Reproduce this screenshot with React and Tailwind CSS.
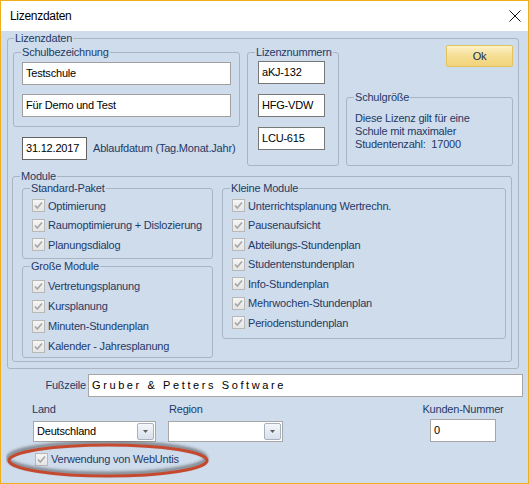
import React from 'react';

const labelColor = 'text-[#1f3a66]';

const Group = ({ label, className = '', labelLeft = 'left-[7px]', children }) => (
  <div className={`relative border border-[#a9b5c5] rounded-[3px] ${className}`}>
    <span className={`absolute ${labelLeft} top-[-7px] px-[1px] bg-[#cfdcec] leading-[13px] whitespace-nowrap ${labelColor}`}>
      {label}
    </span>
    {children}
  </div>
);

const TextBox = ({ value, className = '', border = 'border-[#a0a0a0]' }) => (
  <div className={`bg-white border ${border} flex items-center pl-[3px] text-black whitespace-pre ${className}`}>
    {value}
  </div>
);

const Check = () => (
  <svg width="13" height="13" viewBox="0 0 13 13" className="shrink-0">
    <defs>
      <linearGradient id="cb" x1="0" y1="0" x2="0" y2="1">
        <stop offset="0" stopColor="#f6f6f6" />
        <stop offset="1" stopColor="#e4e4e4" />
      </linearGradient>
    </defs>
    <rect x="0.5" y="0.5" width="12" height="12" fill="url(#cb)" stroke="#b8b8b8" />
    <path d="M3 6.5 L5.3 9 L10 3.5" fill="none" stroke="#a6a6a6" strokeWidth="1.6" />
  </svg>
);

const CheckRow = ({ label, h = 'h-[19.5px]' }) => (
  <div className={`flex items-center ${h}`}>
    <Check />
    <span className={`ml-[3px] whitespace-nowrap ${labelColor}`}>{label}</span>
  </div>
);

const Combo = ({ value, className = '' }) => (
  <div className={`h-[21px] bg-white border border-[#a7a7a7] flex items-center justify-between pl-[3px] pr-[1px] text-black ${className}`}>
    <span>{value}</span>
    <div className="w-[17px] h-[17px] border border-[#a7b2c1] rounded-[2px] bg-gradient-to-b from-[#f4f7fb] to-[#d8e0eb] flex items-center justify-center">
      <svg width="5" height="3" viewBox="0 0 5 3">
        <path d="M0 0 H5 L2.5 3 Z" fill="#5c5c5c" />
      </svg>
    </div>
  </div>
);

const standard = ['Optimierung', 'Raumoptimierung + Dislozierung', 'Planungsdialog'];
const gross = ['Vertretungsplanung', 'Kursplanung', 'Minuten-Stundenplan', 'Kalender - Jahresplanung'];
const klein = [
  'Unterrichtsplanung Wertrechn.',
  'Pausenaufsicht',
  'Abteilungs-Stundenplan',
  'Studentenstundenplan',
  'Info-Stundenplan',
  'Mehrwochen-Stundenplan',
  'Periodenstundenplan',
];

export default function App() {
  return (
    <div className="relative w-[529px] h-[484px] border border-[#f0ad1c] bg-[#cfdcec] flex flex-col overflow-hidden font-['Liberation_Sans',Arial,sans-serif] text-[11px] tracking-[-0.2px]">
      {/* title bar */}
      <div className="h-[30px] shrink-0 bg-white flex items-center justify-between pl-[9px] pr-[7px]">
        <span className="text-[12px] tracking-[-0.3px] text-black">Lizenzdaten</span>
        <svg width="12" height="12" viewBox="0 0 12 12">
          <path d="M0.5 0.5 L11.5 11.5 M11.5 0.5 L0.5 11.5" stroke="#111" strokeWidth="1" />
        </svg>
      </div>

      {/* Lizenzdaten */}
      <Group label="Lizenzdaten" labelLeft="left-[6px]" className="ml-[6px] mt-[7px] w-[512px] h-[331px] shrink-0">
        <div className="flex">
          <div className="ml-[5px] flex flex-col">
            <Group label="Schulbezeichnung" className="mt-[13px] w-[227px] h-[75px]">
              <TextBox value="Testschule" className="ml-[8px] mt-[9px] w-[209px] h-[23px]" />
              <TextBox value="Für Demo und Test" className="ml-[8px] mt-[9px] w-[209px] h-[23px]" />
            </Group>
            <div className="mt-[10px] ml-[9px] flex items-center">
              <TextBox value="31.12.2017" border="border-[#646464]" className="w-[65px] h-[23px]" />
              <span className={`ml-[6px] ${labelColor}`}>Ablaufdatum (Tag.Monat.Jahr)</span>
            </div>
          </div>

          <Group label="Lizenznummern" className="ml-[7px] mt-[13px] w-[92px] h-[114px]">
            <TextBox value="aKJ-132" border="border-[#777]" className="ml-[10px] mt-[8px] w-[67px] h-[23px]" />
            <TextBox value="HFG-VDW" border="border-[#777]" className="ml-[10px] mt-[10px] w-[67px] h-[23px]" />
            <TextBox value="LCU-615" border="border-[#777]" className="ml-[10px] mt-[10px] w-[67px] h-[23px]" />
          </Group>

          <div className="ml-[7px] w-[167px] flex flex-col">
            <button className="ml-[100px] mt-[6px] w-[67px] h-[22px] border border-[#e3c35f] rounded-[2px] bg-gradient-to-b from-[#fdf2c8] via-[#f5dd92] to-[#f1d47c] text-[#1c2c4c] text-[11px] leading-none">
              Ok
            </button>
            <Group label="Schulgröße" className="mt-[30px] h-[69px] w-full">
              <div className={`ml-[8px] mt-[14px] leading-[13px] whitespace-pre ${labelColor}`}>
                <div>Diese Lizenz gilt für eine</div>
                <div>Schule mit maximaler</div>
                <div>Studentenzahl:  17000</div>
              </div>
            </Group>
          </div>
        </div>

        {/* Module */}
        <Group label="Module" className="ml-[4px] mt-[10px] w-[500px] h-[186px]">
          <div className="flex">
            <div className="ml-[9px] mt-[11px] flex flex-col">
              <Group label="Standard-Paket" className="w-[191px] h-[71px]">
                <div className="pt-[7px] pl-[9px]">
                  {standard.map((s) => (
                    <CheckRow key={s} label={s} />
                  ))}
                </div>
              </Group>
              <Group label="Große Module" className="mt-[7px] w-[191px] h-[92px]">
                <div className="pt-[9px] pl-[9px]">
                  {gross.map((s) => (
                    <CheckRow key={s} label={s} h="h-[20px]" />
                  ))}
                </div>
              </Group>
            </div>
            <Group label="Kleine Module" className="ml-[9px] mt-[11px] w-[284px] h-[151px]">
              <div className="pt-[7px] pl-[9px]">
                {klein.map((s) => (
                  <CheckRow key={s} label={s} />
                ))}
              </div>
            </Group>
          </div>
        </Group>
      </Group>

      {/* Fußzeile */}
      <div className="mt-[5px] flex items-center">
        <span className={`ml-[29px] w-[56px] text-right ${labelColor}`}>Fußzeile</span>
        <TextBox
          value="Gruber & Petters Software"
          border="border-[#a6a6a6]"
          className="ml-[2px] w-[435px] h-[23px] tracking-[2.6px]"
        />
      </div>

      {/* Land / Region / Kunden-Nummer */}
      <div className="mt-[6px] flex">
        <div className="ml-[31px] w-[124px] flex flex-col">
          <span className={`leading-[13px] ${labelColor}`}>Land</span>
          <Combo value="Deutschland" className="ml-[1px] mt-[5px] w-[123px]" />
        </div>
        <div className="ml-[12px] w-[115px] flex flex-col">
          <span className={`ml-[1px] leading-[13px] ${labelColor}`}>Region</span>
          <Combo value="" className="mt-[5px] w-[115px]" />
        </div>
        <div className="ml-[137px] w-[86px] flex flex-col items-center">
          <span className={`leading-[13px] whitespace-nowrap ${labelColor}`}>Kunden-Nummer</span>
          <TextBox value="0" border="border-[#a6a6a6]" className="mt-[3px] w-[66px] h-[23px]" />
        </div>
      </div>

      {/* WebUntis */}
      <div className="mt-[11px] ml-[34px] flex items-center h-[13px]">
        <Check />
        <span className={`ml-[3px] ${labelColor}`}>Verwendung von WebUntis</span>
      </div>

      {/* red marker ellipse */}
      <svg className="absolute left-[5px] top-[440px] pointer-events-none" width="206" height="39" viewBox="0 0 206 39">
        <defs>
          <filter id="sh" x="-10%" y="-50%" width="120%" height="200%">
            <feGaussianBlur stdDeviation="1.6" />
          </filter>
        </defs>
        <ellipse cx="101" cy="17" rx="99" ry="15.5" fill="none" stroke="rgba(50,50,50,0.55)" strokeWidth="3.5" filter="url(#sh)" />
        <ellipse cx="102" cy="19.5" rx="99" ry="15.5" fill="none" stroke="#c4492e" strokeWidth="3.2" />
      </svg>
    </div>
  );
}
